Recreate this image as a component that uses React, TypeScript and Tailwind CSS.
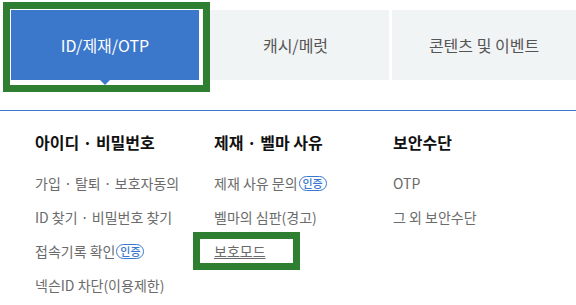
import React from "react";

const Badge = () => (
  <span className="inline-flex items-center justify-center h-[15px] w-[28px] ml-[1px] rounded-full border border-[#3a78cf] text-[#3a78cf] text-[11px] leading-none font-medium">
    인증
  </span>
);

export default function App() {
  const font = { fontFamily: '"Noto Sans CJK KR", "Noto Sans", sans-serif' };
  return (
    <div className="w-[576px] h-[305px] bg-white overflow-hidden relative" style={font}>
      <div className="pt-[10px] pl-[11px] flex gap-[3px]">
        <div className="relative w-[188px] h-[70px] bg-[#3b77cb] flex items-center justify-center text-white text-[16px]">
          ID/제재/OTP
          <span className="absolute left-1/2 -translate-x-1/2 top-full w-0 h-0 border-l-[5px] border-r-[5px] border-t-[5px] border-l-transparent border-r-transparent border-t-[#3b77cb]" />
          <span className="absolute left-[-8px] top-[-8px] w-[207px] h-[90px] border-[7px] border-[#2e7f32] pointer-events-none" />
        </div>
        <div className="w-[187px] h-[70px] bg-[#f1f4f5] flex items-center justify-center text-[#555] text-[16px]">
          캐시/메럿
        </div>
        <div className="flex-1 h-[70px] bg-[#f1f4f5] flex items-center justify-center text-[#555] text-[16px]">
          콘텐츠 및 이벤트
        </div>
      </div>
      <div className="mt-[30px] h-[1px] bg-[#3a78cf]" />
      <div className="pl-[35px] pt-[21px] flex">
        <div className="w-[179px]">
          <div className="h-[20px] leading-[20px] text-[16px] font-bold text-[#111]">아이디 · 비밀번호</div>
          <div className="mt-[14px] text-[14px] text-[#6b6b6b]">
            <div className="h-[34px] flex items-center">가입 · 탈퇴 · 보호자동의</div>
            <div className="h-[34px] flex items-center">ID 찾기 · 비밀번호 찾기</div>
            <div className="h-[34px] flex items-center">접속기록 확인<Badge /></div>
            <div className="h-[34px] flex items-center">넥슨ID 차단(이용제한)</div>
          </div>
        </div>
        <div className="w-[179px]">
          <div className="h-[20px] leading-[20px] text-[16px] font-bold text-[#111]">제재 · 벨마 사유</div>
          <div className="mt-[14px] text-[14px] text-[#6b6b6b]">
            <div className="h-[34px] flex items-center">제재 사유 문의<Badge /></div>
            <div className="h-[34px] flex items-center">벨마의 심판(경고)</div>
            <div className="h-[34px] flex items-center relative">
              <span className="underline">보호모드</span>
              <span className="absolute left-[-21px] top-[-2px] w-[107px] h-[38px] border-[7px] border-[#2e7f32] pointer-events-none" />
            </div>
          </div>
        </div>
        <div className="w-[179px]">
          <div className="h-[20px] leading-[20px] text-[16px] font-bold text-[#111]">보안수단</div>
          <div className="mt-[14px] text-[14px] text-[#6b6b6b]">
            <div className="h-[34px] flex items-center">OTP</div>
            <div className="h-[34px] flex items-center">그 외 보안수단</div>
          </div>
        </div>
      </div>
    </div>
  );
}
